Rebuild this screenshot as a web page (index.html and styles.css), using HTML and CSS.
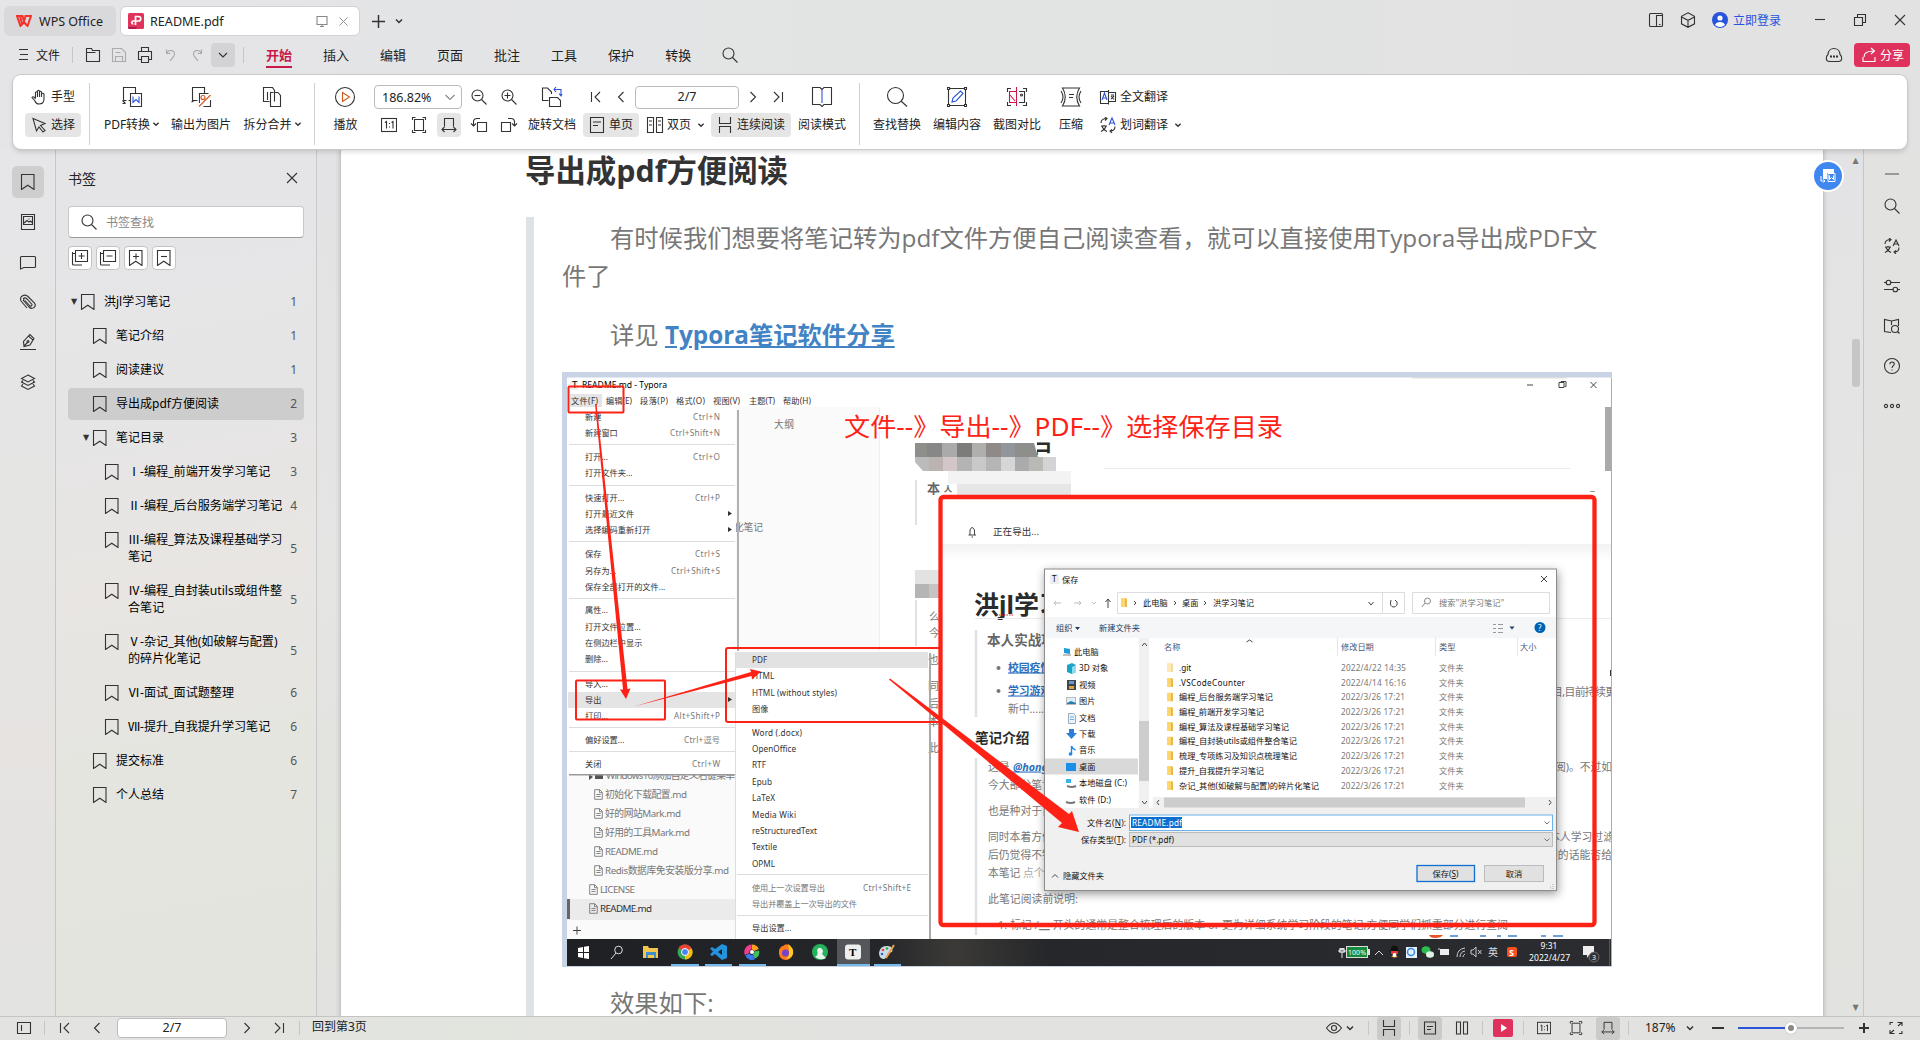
FILE: index.html
```html
<!DOCTYPE html>
<html lang="zh-CN">
<head>
<meta charset="utf-8">
<title>README.pdf - WPS Office</title>
<link rel="stylesheet" href="styles.css">
</head>
<body>
<svg class="defs" aria-hidden="true">
  <symbol id="chev" viewBox="0 0 16 16"><path d="M5 6.500l3 3 3-3"/></symbol>
  <symbol id="close" viewBox="0 0 16 16"><path d="M3 3l10 10M13 3L3 13"/></symbol>
  <symbol id="search" viewBox="0 0 16 16"><circle cx="6.500" cy="6.500" r="5.500"/><path d="M10.500 10.500l5 5"/></symbol>
  <symbol id="mark" viewBox="0 0 16 16"><path d="M1.500 .5h12.500v15l-6.200-4.300-6.300 4.300z"/></symbol>
  <symbol id="first" viewBox="0 0 16 16"><path d="M3.500 3v10M12 3L7 8l5 5"/></symbol>
  <symbol id="prev" viewBox="0 0 16 16"><path d="M10.500 3l-5 5 5 5"/></symbol>
  <symbol id="next" viewBox="0 0 16 16"><path d="M5.500 3l5 5-5 5"/></symbol>
  <symbol id="last" viewBox="0 0 16 16"><path d="M12.500 3v10M4 3l5 5-5 5"/></symbol>
  <symbol id="one" viewBox="0 0 16 16"><rect x=".5" y="1.500" width="15" height="13"/><path d="M4 5.500l1.500-1v7M10.500 5.500l1.500-1v7M8.500 6v1M8.500 9.500v1"/></symbol>
  <symbol id="fitpage" viewBox="0 0 16 16"><path d="M3.500 2.500h9v11h-9zM1.500 3V.5h3M11.500.5h3V3M1.500 13v2.500h3M11.500 15.500h3V13"/></symbol>
  <symbol id="fitwidth" viewBox="0 0 16 16"><path d="M3.500 9.500v-8h9v8M1 12.500h14M3.500 10L1 12.500 3.500 15M12.500 10l2.500 2.500-2.500 2.500"/></symbol>
  <symbol id="cont" viewBox="0 0 16 16"><path d="M2.500 0v6.500h11V0M2.500 16V9.500h11V16"/></symbol>
  <symbol id="single" viewBox="0 0 16 16"><path d="M1.500.5h13v15h-13zM4 5h8M4 8.500h5"/></symbol>
  <symbol id="file" viewBox="0 0 9 11"><path d="M.7.7h5l2.600 2.600v7H.7zM5.500.7v3h2.800M2.400 5.500h4.200M2.400 7.500h4.200"/></symbol>
  <symbol id="trans" viewBox="0 0 16 16"><path d="M1 6c0-3 2-4.500 6-4.500M5 0l2 1.500L5 3.500M15 9.500c0 3-2 4.500-5 4.500M12 12.500L10 14l2 2M1 9h6M4 8v1M2 9.500c1 3 3 4 5 5M6 9.500c-1 3-3 4-5 5"/></symbol>
  <symbol id="folder" viewBox="0 0 8 9"><path d="M1 0h4l2 1v8H1z" fill="#ffd66b" stroke="none"/><path d="M5 0l2 1v8H5z" fill="#e8b84c" stroke="none"/></symbol>
</svg>

<div class="app">
<header class="titlebar">
  <div class="tab tab-home">
    <svg class="wps" viewBox="0 0 16 12"><path d="M1 1h5.500L8 6.500 9.500 1H15L11.500 11 8 7l-3.500 4zM4 1l2 8" fill="none" stroke="#f5322b" stroke-width="2"/></svg>
    <span>WPS Office</span>
  </div>
  <div class="tab tab-doc">
    <svg class="pdf" viewBox="0 0 16 16"><rect width="16" height="16" rx="1.500" fill="#e0325a"/><path d="M0 14h9l-1 2H1.500Q0 16 0 14z" fill="#a81c4c"/><path d="M7.500 12V3.500h3a2.200 2.200 0 010 4.500H5.300a1.500 1.500 0 100 3" fill="none" stroke="#fff" stroke-width="1.700"/></svg>
    <span class="tab-name">README.pdf</span>
    <svg class="ic gray" viewBox="0 0 16 16"><path d="M3 3.500h10v8H3zM6 13.500h4M8 11.500v2"/></svg>
    <svg class="ic gray tab-x"><use href="#close"/></svg>
  </div>
  <svg class="ic plus" viewBox="0 0 16 16"><path d="M8 1v14M1 8h14"/></svg>
  <svg class="ic bold newchev"><use href="#chev"/></svg>
  <div class="win">
    <svg class="ic" viewBox="0 0 16 16"><rect x="1.500" y="1.500" width="13" height="13" rx="1"/><path d="M8.500 14.500v-11h6M11 12.500h1.500"/></svg>
    <svg class="ic" viewBox="0 0 16 16"><path d="M8 .8l6.500 3.500v7.500L8 15.300 1.500 11.800V4.300zM1.500 5L8 8.300 14.500 5M8 8.300v7"/></svg>
    <div class="login"><svg class="ic" viewBox="0 0 16 16"><circle cx="8" cy="8" r="8" fill="#2754dc" stroke="none"/><circle cx="8" cy="6" r="2.600" fill="#fff" stroke="none"/><path d="M3 13c1-4 9-4 10 0q-5 4-10 0z" fill="#fff" stroke="none"/></svg><span>立即登录</span></div>
    <svg class="ic" viewBox="0 0 16 16"><path d="M3 7.500h10"/></svg>
    <svg class="ic" viewBox="0 0 16 16"><path d="M2.500 5.500h8v8h-8zM5.500 5.500v-3h8v8h-3"/></svg>
    <svg class="ic"><use href="#close"/></svg>
  </div>
</header>

<nav class="menubar">
  <svg class="ic burger" viewBox="0 0 16 16"><path d="M4 2.500h9M5 7.500h8M4 12.500h9"/></svg>
  <span class="file">文件</span>
  <i class="vsep"></i>
  <div class="quick">
    <svg class="ic" viewBox="0 0 16 16"><path d="M1.500 14.500v-13h5l1 2h7v11zM1.500 5.500h9"/></svg>
    <svg class="ic faint" viewBox="0 0 16 16"><path d="M1.500 1.500h9l4 4v9h-13zM4.500 14v-4.500h7V14M4.500 5.500h5"/></svg>
    <svg class="ic" viewBox="0 0 16 16"><path d="M4.500 4.500v-4h7v4M4.500 12.500h-3v-8h13v8h-3M4.500 9.500h7v6h-7z"/></svg>
    <svg class="ic faint" viewBox="0 0 16 16"><path d="M3.500 2.500v4h4M3.500 6.500c2-5 9-3 8 1-.5 2-2 3.500-4.500 6.500"/></svg>
    <svg class="ic faint" viewBox="0 0 16 16"><path d="M12.500 2.500v4h-4M12.500 6.500c-2-5-9-3-8 1 .5 2 2 3.500 4.500 6.500"/></svg>
  </div>
  <span class="dropbtn"><svg class="ic"><path d="M4 6l4 4 4-4"/></svg></span>
  <i class="vsep"></i>
  <div class="tabs">
    <span class="on">开始</span><span>插入</span><span>编辑</span><span>页面</span><span>批注</span><span>工具</span><span>保护</span><span>转换</span>
    <svg class="ic"><use href="#search"/></svg>
  </div>
  <div class="menu-right">
    <svg class="ic" viewBox="0 0 16 16"><path d="M3.500 14.500c-4 0-4-5-1.500-7 .5-8 11.500-8 12 0 2.500 2 2.500 7-1.500 7z"/><path d="M4 9.500h2M7 9.500h2M10 9.500h2" stroke-width="2"/></svg>
    <span class="share"><svg class="ic" viewBox="0 0 16 16"><path d="M2 10v4.500h12V10M3 10c0-4 3-6 10-6M10 1l3.500 3L10 7"/></svg>分享</span>
  </div>
</nav>

<section class="ribbon">
  <div class="col hand sep">
    <span class="btn"><svg class="ic" viewBox="0 0 16 16"><path d="M4.500 9V3.500q1-1.500 2 0V8M6.500 3V2q1-1.500 2 0v6M8.500 3q1-1.500 2 0v5M10.500 5q1.500-1.500 2.500 0v5q0 5-5 5-3 0-4-3L1 8.500q1-1.500 2.500 0l1 1.500"/></svg>手型</span>
    <span class="btn on"><svg class="ic" viewBox="0 0 16 16"><path d="M2 1.500l12 5-4.500 2 4.500 5-2 1.500-4-5-2.500 4z"/></svg>选择</span>
  </div>
  <div class="col"><svg class="big" viewBox="0 0 20 20"><path d="M8.500 13.500h-2m-2 0h-3v-13h12v6M.5 13.500l3 3M3.500 16.500l-3 0"/><path d="M8.500 6.500h11v13h-11z"/><path class="blue" d="M11 9.500v6l3-3 3 3v-6"/></svg><span class="lbl">PDF转换<svg class="mini"><use href="#chev"/></svg></span></div>
  <div class="col"><svg class="big" viewBox="0 0 20 20"><path d="M6.500 13.500h-5v-13h12v6M.5 15l3-1.500M19.500 13v6.500h-7M8.500 16V6.500h9"/><g class="orange"><circle cx="12" cy="10.500" r="2"/><path d="M8 19.500L19.500 8"/></g></svg><span class="lbl">输出为图片</span></div>
  <div class="col sep"><svg class="big" viewBox="0 0 20 20"><path d="M7.500 14.500h-6v-14h9l2 3v11M5.500 5v8M12 5.500h4l2.500 3v11h-10v-14h3M12.500 5v8"/></svg><span class="lbl">拆分合并<svg class="mini"><use href="#chev"/></svg></span></div>
  <div class="col play"><svg class="big" viewBox="0 0 20 20"><circle cx="10" cy="10" r="9.500"/><path class="orange" d="M7.500 5.500v9l7-4.500z"/></svg><span class="lbl">播放</span></div>
  <div class="zoomgrid">
    <span class="zoombox">186.82%<svg class="ic gray"><path d="M3.500 6l4.500 4.500L12.500 6"/></svg></span>
    <svg class="ic" viewBox="0 0 16 16"><use href="#search"/><path d="M3.500 6.500h6"/></svg>
    <svg class="ic" viewBox="0 0 16 16"><use href="#search"/><path d="M3.500 6.500h6M6.500 3.500v6"/></svg>
    <svg class="ic"><use href="#one"/></svg>
    <svg class="ic"><use href="#fitpage"/></svg>
    <span class="sq on"><svg class="ic"><use href="#fitwidth"/></svg></span>
    <svg class="ic" viewBox="0 0 16 16"><path d="M6.500 5.500h9v9h-9zM9 1.500H6Q2.500 1.500 2.500 5v4M0 6.500L2.500 9 5 6.500"/></svg>
    <svg class="ic" viewBox="0 0 16 16"><path d="M.5 5.500h9v9h-9zM7 1.500h3q3.500 0 3.500 3.500v4M11 6.500L13.500 9 16 6.500"/></svg>
  </div>
  <div class="col"><svg class="big" viewBox="0 0 20 20"><path d="M6.500 13.500h-6V1h5l4 4v2M7.500 10.500h8l3 3v6h-11z"/><path class="blue" d="M12 2.500h7v6M14 0l-2 2.500L14 5M17 6.500L19 9l1-2"/></svg><span class="lbl">旋转文档</span></div>
  <div class="pager">
    <div class="prow">
      <svg class="ic"><use href="#first"/></svg><svg class="ic"><use href="#prev"/></svg><span class="pagebox">2/7</span><svg class="ic"><use href="#next"/></svg><svg class="ic"><use href="#last"/></svg>
    </div>
    <div class="vrow">
      <span class="btn on"><svg class="ic"><use href="#single"/></svg>单页</span>
      <span class="btn dbl"><svg class="ic" viewBox="0 0 16 16"><path d="M.5.5h6v15h-6zM9.500.5h6v15h-6zM2 4h3M2 8h3M11 4h3M11 8h3"/></svg>双页<svg class="mini"><use href="#chev"/></svg></span>
      <span class="btn on wide"><svg class="ic"><use href="#cont"/></svg>连续阅读</span>
    </div>
  </div>
  <div class="col sep read"><svg class="big" viewBox="0 0 20 20"><path d="M10 2.500L8 .5H.5v17H8l2 2 2-2h7.500V.5H12z"/><path class="blue" d="M10 3v13"/></svg><span class="lbl">阅读模式</span></div>
  <div class="col find"><svg class="big" viewBox="0 0 20 20"><circle cx="8.500" cy="8.500" r="8"/><path d="M14 14l6 5.500"/></svg><span class="lbl">查找替换</span></div>
  <div class="col"><svg class="big" viewBox="0 0 20 20"><path d="M1.500 3v14M18.500 3v14M3 1.500h14M3 18.500h14M.5.5h2v2h-2zM17.500.5h2v2h-2zM.5 17.500h2v2h-2zM17.500 17.500h2v2h-2z"/><path class="blue" d="M5 15l1-4 7.500-7 2.500 2.500-7 7.500z"/></svg><span class="lbl">编辑内容</span></div>
  <div class="col"><svg class="big" viewBox="0 0 20 20"><path d="M.5 5V1.500H4M16 1.500h3.500V5M.5 15v3.500H4M16 18.500h3.500V15M12 4.500h5.500v11H12"/><circle cx="14.500" cy="8" r="1"/><path class="red" d="M9.500 0v19M9 4.500H2.500v11H9M3 8l5 6"/></svg><span class="lbl">截图对比</span></div>
  <div class="col"><svg class="big" viewBox="0 0 20 20"><path d="M0 4q4 6 0 12M20 4q-4 6 0 12M1.500 1h17Q13 10 18.500 19h-17Q7 10 1.500 1zM8 7.500h5M8 10.500h4"/></svg><span class="lbl">压缩</span></div>
  <div class="col trans">
    <span class="btn"><svg class="ic" viewBox="0 0 16 16"><path d="M9 14.500H.5v-12h8M8.500 1v14.500M9 3.500h6.500v9H9M11 6h3M11 10l3-3M11 7l3 3.500"/><path class="blue" d="M2 11l2.500-7L7 11M3 9h3"/></svg>全文翻译</span>
    <span class="btn"><svg class="ic" viewBox="0 0 16 16"><use href="#trans"/><path class="blue" d="M9 8l3-7 3 7M10 6h4"/></svg>划词翻译<svg class="mini"><use href="#chev"/></svg></span>
  </div>
</section>

<main class="main">
  <aside class="rail">
    <span class="on"><svg class="ic"><use href="#mark"/></svg></span>
    <span><svg class="ic" viewBox="0 0 16 16"><path d="M1.500.5h13v15h-13zM3.500 2.500h9v8h-9zM4 9l3-2.500L9 8l1.500-1L12 8.500M8.500 5h1"/></svg></span>
    <span><svg class="ic" viewBox="0 0 16 16"><path d="M.5 15V3.500q0-1 1-1h13q1 0 1 1v9q0 1-1 1H4z"/></svg></span>
    <span><svg class="ic" viewBox="0 0 16 16"><path d="M3 6l6 7c3 3 8 0 5.500-4L8 2.500C5-.5-1 2 1 7l6 7M4 6.500L3.500 4.500Q5 3 7 5l5 5.500Q12 12.500 10 12L5 6.500"/></svg></span>
    <span><svg class="ic" viewBox="0 0 16 16"><path d="M0 15.500h16M4 12.500l-.5-5 5-5.500L13 6l-3 5zM8.500 2L10 .500 14 4.500 13 6M4 12l4-4"/><circle cx="8" cy="7.500" r="1"/></svg></span>
    <span><svg class="ic" viewBox="0 0 16 16"><path d="M8 1l6.500 3.500L8 8 1.500 4.500zM3 6.500L1.500 8 8 11.500 14.500 8 13 6.500M3 10l-1.500 2L8 15.500l6.500-3.500L13 10"/></svg></span>
  </aside>

  <aside class="panel">
    <div class="panel-head"><h2>书签</h2><svg class="ic"><use href="#close"/></svg></div>
    <div class="panel-search"><svg class="ic"><use href="#search"/></svg>书签查找</div>
    <div class="tools">
      <span><svg class="ic" viewBox="0 0 16 16"><path d="M3.500.5h12v11h-12zM.5 2v12q0 1 1 1H10M9.500 3v6M6.500 6h6M.5 3.500h3"/></svg></span>
      <span><svg class="ic" viewBox="0 0 16 16"><path d="M3.500.5h12v11h-12zM.5 2v12q0 1 1 1H10M6.500 6h6M.5 3.500h3"/></svg></span>
      <span><svg class="ic"><use href="#mark"/><path d="M8 3.500v6M5 6.500h6"/></svg></span>
      <span><svg class="ic"><use href="#mark"/><path d="M5 6.500h6"/></svg></span>
    </div>
    <ul class="tree">
      <li class="l1"><b>▼</b><svg class="ic"><use href="#mark"/></svg><p>洪jl学习笔记</p><em>1</em></li>
      <li class="l2"><svg class="ic"><use href="#mark"/></svg><p>笔记介绍</p><em>1</em></li>
      <li class="l2"><svg class="ic"><use href="#mark"/></svg><p>阅读建议</p><em>1</em></li>
      <li class="l2 on"><svg class="ic"><use href="#mark"/></svg><p>导出成pdf方便阅读</p><em>2</em></li>
      <li class="l2"><b>▼</b><svg class="ic"><use href="#mark"/></svg><p>笔记目录</p><em>3</em></li>
      <li class="l3"><svg class="ic"><use href="#mark"/></svg><p>Ⅰ-编程_前端开发学习笔记</p><em>3</em></li>
      <li class="l3"><svg class="ic"><use href="#mark"/></svg><p>Ⅱ-编程_后台服务端学习笔记</p><em>4</em></li>
      <li class="l3"><svg class="ic"><use href="#mark"/></svg><p>Ⅲ-编程_算法及课程基础学习<br>笔记</p><em>5</em></li>
      <li class="l3"><svg class="ic"><use href="#mark"/></svg><p>Ⅳ-编程_自封装utils或组件整<br>合笔记</p><em>5</em></li>
      <li class="l3"><svg class="ic"><use href="#mark"/></svg><p>Ⅴ-杂记_其他(如破解与配置)<br>的碎片化笔记</p><em>5</em></li>
      <li class="l3"><svg class="ic"><use href="#mark"/></svg><p>Ⅵ-面试_面试题整理</p><em>6</em></li>
      <li class="l3"><svg class="ic"><use href="#mark"/></svg><p>Ⅶ-提升_自我提升学习笔记</p><em>6</em></li>
      <li class="l2"><svg class="ic"><use href="#mark"/></svg><p>提交标准</p><em>6</em></li>
      <li class="l2"><svg class="ic"><use href="#mark"/></svg><p>个人总结</p><em>7</em></li>
    </ul>
  </aside>

  <div class="viewer">
    <article class="page">
      <h1>导出成pdf方便阅读</h1>
      <blockquote>
        <p>有时候我们想要将笔记转为pdf文件方便自己阅读查看，就可以直接使用Typora导出成PDF文<br>件了</p>
        <p class="see">详见 <a>Typora笔记软件分享</a></p>
        <svg class="shot" viewBox="562 372 1050 595">
          <defs>
            <linearGradient id="fade" x1="0" y1="0" x2="0" y2="1"><stop offset="0" stop-color="#f2f2f2"/><stop offset="1" stop-color="#fff"/></linearGradient>
            <linearGradient id="bar" x1="0" x2="1"><stop offset="0" stop-color="#1f2024"/><stop offset=".3" stop-color="#25262a"/><stop offset=".37" stop-color="#3b3a37"/><stop offset=".46" stop-color="#26272a"/><stop offset="1" stop-color="#2a2c30"/></linearGradient>
            <filter id="soft" x="-5%" y="-5%" width="110%" height="112%"><feDropShadow dx="1" dy="3" stdDeviation="5" flood-opacity=".4"/></filter>
            <clipPath id="stub"><rect x="1037" y="440" width="16" height="15"/></clipPath>
          </defs>
          <rect x="562" y="372" width="1050" height="595" fill="#c9d3e6"/>
          <rect x="567" y="377.500" width="1044" height="562" fill="#fff"/>
          <!-- editor title and menu bar -->
          <rect x="570" y="381" width="8" height="9" fill="#f0f0f0"/>
          <g class="t10"><text x="572" y="385">T</text><text x="582" y="385" textLength="85" lengthAdjust="spacingAndGlyphs">README.md - Typora</text></g>
          <rect x="570" y="394" width="32" height="13" fill="#e5e5e5"/>
          <g class="t8 d"><text x="571" y="401" textLength="27">文件(F)</text><text x="606" y="401" textLength="26">编辑(E)</text><text x="640" y="401" textLength="28">段落(P)</text><text x="676" y="401" textLength="29">格式(O)</text><text x="713" y="401" textLength="27">视图(V)</text><text x="749" y="401" textLength="26">主题(T)</text><text x="783" y="401" textLength="28">帮助(H)</text></g>
          <path class="ln" d="M1527 385h6M1559 382.500h5v5h-5zM1561 382.500v-1h5v5h-1.500M1590.500 382l6 6M1596.500 382l-6 6"/>
          <rect x="1412" y="377" width="155" height="1.500" fill="#ddd"/>
          <rect x="567" y="407" width="312" height="532" fill="#fafafa"/>
          <path d="M879.500 407v532" stroke="#eee"/>
          <rect x="1605" y="407" width="6" height="64" fill="#ababab"/>
          <g class="t10 m"><text x="774" y="425" textLength="20">大纲</text><text x="734" y="528" textLength="29">化笔记</text></g>
          <!-- pixelated title -->
          <g clip-path="url(#stub)"><text class="h" x="1032" y="452" font-size="21">己</text></g>
          <g><rect x="915" y="443" width="12" height="14" fill="#8e8e8a"/><rect x="927" y="443" width="15" height="14" fill="#878788"/><rect x="942" y="443" width="15" height="14" fill="#aaa"/><rect x="957" y="443" width="15" height="14" fill="#7c7d7b"/><rect x="972" y="443" width="14" height="14" fill="#afafad"/><rect x="986" y="443" width="15" height="14" fill="#8f8988"/><rect x="1001" y="443" width="14" height="14" fill="#929599"/><path d="M1015 443h19l4 14h-23z" fill="#8e8e8d"/>
          <path d="M915 457h14v14h-6l-8-9z" fill="#bbb"/><rect x="929" y="457" width="14" height="14" fill="#bcb2b0"/><rect x="943" y="457" width="14" height="14" fill="#d2c6c8"/><rect x="957" y="457" width="15" height="14" fill="#b4b4b4"/><rect x="972" y="457" width="14" height="14" fill="#c9c9c9"/><rect x="986" y="457" width="15" height="14" fill="#b5b5b5"/><rect x="1001" y="457" width="14" height="14" fill="#d6d6d6"/><rect x="1015" y="457" width="14" height="14" fill="#aaabad"/><rect x="1029" y="457" width="14" height="14" fill="#b9b9b6"/><rect x="1043" y="457" width="13" height="14" fill="#d4d4d4"/>
          <rect x="948" y="471" width="123" height="13" fill="#f3f3f3"/><rect x="957" y="484" width="114" height="12" fill="#e6e6e7"/>
          <rect x="915" y="570" width="28" height="14" fill="#e2e2e2"/><rect x="915" y="584" width="28" height="14" fill="#b5b5b5"/><rect x="929" y="584" width="14" height="14" fill="#c5c3c4"/></g>
          <path d="M1104 468.500h466" stroke="#eaeaea"/>
          <path d="M916 480v45M916 600v46" stroke="#dfe2e5" stroke-width="2"/>
          <text class="h g" x="927" y="489" font-size="13">本</text><text class="h g" x="944" y="489" font-size="8">人</text>
          <path d="M1590 491.500h5" stroke="#999"/>
          <g class="t11 m"><text x="929" y="617">么</text><text x="929" y="633">今</text><text x="928" y="660">也</text><text x="928" y="686">同</text><text x="928" y="704">后</text><text x="928" y="722">本</text><text x="928" y="748">此</text></g>
          <!-- left file list -->
          <g class="t10 m"><text x="606" y="776" textLength="129">Windows10添加自定义右键菜单</text><text x="605" y="795" textLength="82">初始化下载配置.md</text><text x="605" y="814" textLength="76">好的网站Mark.md</text><text x="605" y="833" textLength="85">好用的工具Mark.md</text><text x="605" y="852" textLength="53">README.md</text><text x="605" y="871" textLength="124">Redis数据库免安装版分享.md</text><text x="600" y="890" textLength="35">LICENSE</text></g>
          <rect x="567" y="899" width="168" height="21" fill="#ebebeb"/><rect x="567" y="899" width="3" height="20" fill="#666"/>
          <text class="t10 d" x="600" y="909" textLength="52">README.md</text>
          <g class="ico"><use href="#file" x="594" y="789" width="9" height="11"/><use href="#file" x="594" y="808" width="9" height="11"/><use href="#file" x="594" y="827" width="9" height="11"/><use href="#file" x="594" y="846" width="9" height="11"/><use href="#file" x="594" y="865" width="9" height="11"/><use href="#file" x="589" y="884" width="9" height="11"/><use href="#file" x="589" y="903" width="9" height="11"/></g>
          <path class="ln" d="M573 930.500h8M577 926.500v8"/>
          <path d="M589 774l4 3-4 3zM595 774h8v5h-8z" fill="#555"/>
          <!-- file menu -->
          <rect x="567" y="407" width="169" height="367" fill="#fff"/>
          <rect x="569" y="774" width="166" height="1.500" fill="#999"/>
          <rect x="737" y="410" width="2" height="242" fill="#b0b0b0"/>
          <rect x="568" y="692" width="167" height="16" fill="#e4e4e4"/>
          <path d="M569 444.500h166M569 485.500h166M569 541.500h166M569 598.500h166M569 671.500h166M569 727.500h166M569 751.500h166" stroke="#ddd"/>
          <g class="t8 d"><text x="585" y="417">新建</text><text x="585" y="433">新建窗口</text><text x="585" y="457">打开...</text><text x="585" y="473">打开文件夹...</text><text x="585" y="498">快速打开...</text><text x="585" y="514">打开最近文件</text><text x="585" y="530">选择编码重新打开</text><text x="585" y="554">保存</text><text x="585" y="571">另存为...</text><text x="585" y="587">保存全部打开的文件...</text><text x="585" y="610">属性...</text><text x="585" y="627">打开文件位置...</text><text x="585" y="643">在侧边栏中显示</text><text x="585" y="659">删除...</text><text x="585" y="684">导入...</text><text x="585" y="700">导出</text><text x="585" y="716">打印...</text><text x="585" y="740">偏好设置...</text><text x="585" y="764">关闭</text></g>
          <g class="t8 m end"><text x="720" y="417" textLength="27">Ctrl+N</text><text x="720" y="433" textLength="50">Ctrl+Shift+N</text><text x="720" y="457" textLength="27">Ctrl+O</text><text x="720" y="498" textLength="25">Ctrl+P</text><text x="720" y="554" textLength="25">Ctrl+S</text><text x="720" y="571" textLength="49">Ctrl+Shift+S</text><text x="720" y="716" textLength="46">Alt+Shift+P</text><text x="720" y="740" textLength="36">Ctrl+逗号</text><text x="720" y="764" textLength="28">Ctrl+W</text></g>
          <path d="M728 511l4 2.500-4 2.500zM728 527l4 2.500-4 2.500zM728 697l4 2.500-4 2.500z" fill="#333"/>
          <!-- export submenu -->
          <rect x="736" y="651" width="192" height="288" fill="#fff"/>
          <rect x="736" y="652" width="192" height="16" fill="#e2e2e2"/>
          <path d="M737 874.500h191M737 915.500h191" stroke="#ddd"/><path d="M930 653v286" stroke="#aaa" stroke-width="2"/><path d="M735.500 652v287" stroke="#ddd"/>
          <g class="t8 d"><text x="752" y="660">PDF</text><text x="752" y="676">HTML</text><text x="752" y="693" textLength="85">HTML (without styles)</text><text x="752" y="709">图像</text><text x="752" y="733" textLength="50">Word (.docx)</text><text x="752" y="749" textLength="44">OpenOffice</text><text x="752" y="765">RTF</text><text x="752" y="782" textLength="20">Epub</text><text x="752" y="798" textLength="23">LaTeX</text><text x="752" y="815" textLength="44">Media Wiki</text><text x="752" y="831" textLength="65">reStructuredText</text><text x="752" y="847" textLength="25">Textile</text><text x="752" y="864" textLength="23">OPML</text><text x="752" y="928">导出设置...</text></g>
          <g class="t8 m"><text x="752" y="888" textLength="73">使用上一次设置导出</text><text x="752" y="904" textLength="105">导出并覆盖上一次导出的文件</text><text x="863" y="888" textLength="48">Ctrl+Shift+E</text></g>
          <!-- exporting window -->
          <rect x="942" y="498" width="669" height="441" fill="#fff"/>
          <rect x="942" y="544" width="669" height="16" fill="url(#fade)"/>
          <path class="ln" d="M968.500 535h7.500M970 535v-5q2-5 4.500 0v5M971.500 537h1.500"/>
          <text class="t9 d" x="993" y="532" textLength="46">正在导出...</text>
          <text class="h" x="974" y="605" font-size="25">洪jl学习笔记</text>
          <path d="M999 615h14" stroke="#e22" stroke-dasharray="1.500 1"/><path d="M975 618.500h636" stroke="#eaeaea"/>
          <path d="M976 630v87M976 758v177" stroke="#dfe2e5" stroke-width="2.500"/>
          <text class="h g" x="987" y="640" font-size="13.600">本人实战项</text>
          <circle cx="998.500" cy="668" r="2" fill="#777"/><circle cx="998.500" cy="691" r="2" fill="#777"/>
          <g class="lk"><text x="1008" y="668">校园疫情</text><text x="1008" y="691">学习游戏</text><text x="1013" y="767" font-style="italic">@hongjl</text></g>
          <text class="h" x="975" y="738" font-size="13.600">笔记介绍</text>
          <g class="t11 m"><text x="1008" y="709">新中……</text><text x="988" y="767">这是</text><text x="988" y="785">今大部分笔记</text><text x="988" y="811">也是种对于自</text><text x="988" y="837">同时本着方便</text><text x="988" y="855">后仍觉得不错</text><text x="988" y="873">本笔记</text><text x="1023" y="873" fill="#aaa">点个star</text><text x="988" y="899" textLength="90">此笔记阅读前说明:</text><text x="998" y="925" textLength="510">1. 标记 /▁ 开头的通常是整合梳理后的版本 or 更为详细系统学习阶段的笔记,方便同学们抓重部分进行查阅</text></g>
          <g class="t11 m"><text x="1552" y="692" textLength="64">目,目前持续更</text><text x="1555" y="767" textLength="57">阅)。不过如</text><text x="1549" y="837" textLength="65">本人学习过滤</text><text x="1547" y="855" textLength="65">便的话能否给</text></g>
          <rect x="1610" y="670" width="2" height="6" fill="#333"/>
          <path d="M1429 935h14q-2 3-8 3-5 0-6-3z" fill="#e8532a"/><path d="M1450 936h8M1480 936h6M1497 936h4M1508 936h9M1541 936h5M1553 936h10" stroke="#6fa0d8" stroke-width="2"/>
          <!-- save dialog -->
          <rect x="1044.500" y="569" width="512" height="321.500" fill="#fff" stroke="#8c8c8c" filter="url(#soft)"/>
          <rect x="1045" y="617" width="511" height="21" fill="#f5f6f7"/>
          <rect x="1045" y="808" width="511" height="82" fill="#f0f0f0"/>
          <path d="M1117.500 592.500h287v21h-287zM1382.500 593v20M1412.500 592.500h137v21h-137z" fill="none" stroke="#ddd"/>
          <rect x="1050" y="574" width="9" height="10" fill="#eee"/>
          <g class="t8 k"><text x="1052" y="579">T</text><text x="1062" y="580">保存</text><text x="1143" y="603">此电脑</text><text x="1182" y="603">桌面</text><text x="1213" y="603">洪学习笔记</text></g>
          <path class="ln" d="M1541 576l6 6M1547 576l-6 6M1108 608v-9M1105.500 602l2.500-3 2.500 3M1134 601l2 2-2 2M1174 601l2 2-2 2M1204 601l2 2-2 2M1368.500 602l2.500 3 2.500-3M1391 600q-2 7 3 7 4-1 3-5l-2-2M1246.500 642l3-2 3 2"/>
          <path d="M1061 603h-7M1056 601l-2 2 2 2M1074 603h7M1079 601l2 2-2 2M1092 602l2 2 2-2" fill="none" stroke="#bbb"/>
          <use href="#folder" x="1120" y="598" width="8" height="9"/>
          <circle cx="1427.500" cy="601" r="3" fill="none" stroke="#888"/><path d="M1425 603l-3 4" stroke="#888"/>
          <text class="t8 m" x="1439" y="603" textLength="65">搜索"洪学习笔记"</text>
          <g class="t8" fill="#1f3a63"><text x="1056" y="628">组织</text><text x="1099" y="628">新建文件夹</text></g>
          <path d="M1075 627h5l-2.500 3zM1509.500 626.500h5l-2.500 3z" fill="#1f3a63"/>
          <path d="M1493 624.500h3M1493 628.500h3M1493 632.500h3M1498 624.500h5M1498 628.500h5M1498 632.500h5" stroke="#999"/>
          <circle cx="1540" cy="627.500" r="5.500" fill="#0063b1"/><text x="1538" y="628.500" font-size="8" fill="#fff">?</text>
          <rect x="1045" y="758.500" width="93" height="16" fill="#d9d9d9"/>
          <rect x="1139" y="638" width="10" height="170" fill="#f0f0f0"/><rect x="1139" y="721" width="10" height="60" fill="#cdcdcd"/>
          <rect x="1153" y="797" width="403" height="11" fill="#f0f0f0"/><rect x="1164" y="797.500" width="361" height="10" fill="#cdcdcd"/>
          <path class="ln" d="M1142 646l2.500-3 2.500 3M1142 801l2.500 3 2.500-3M1159 800l-2 2.500 2 2.500M1549 800l2 2.500-2 2.500"/>
          <path d="M1337.500 638v18M1435.500 638v18M1517.500 638v18" stroke="#e5e5e5"/>
          <g class="t8 k"><text x="1074" y="652">此电脑</text><text x="1079" y="668">3D 对象</text><text x="1079" y="685">视频</text><text x="1079" y="701">图片</text><text x="1079" y="718">文档</text><text x="1079" y="734">下载</text><text x="1079" y="750">音乐</text><text x="1079" y="767">桌面</text><text x="1079" y="783" textLength="48">本地磁盘 (C:)</text><text x="1079" y="800" textLength="32">软件 (D:)</text></g>
          <path d="M1064 648l6 1v5l-6-1z" fill="#1d9bdc"/><path d="M1063 655h8" stroke="#aaa" stroke-width="1.500"/>
          <path d="M1067 665l5-2 4 2v7l-4 2-5-2z" fill="#19a3c8"/><path d="M1072 667l4-2v7l-4 2z" fill="#8adcf0"/>
          <rect x="1067" y="680" width="9" height="10" fill="#444"/><rect x="1069" y="681" width="5" height="3" fill="#5a9ae0"/><rect x="1069" y="686" width="5" height="3" fill="#d8a63c"/>
          <rect x="1066.500" y="697.500" width="9" height="7" fill="#dfeefa" stroke="#bbb"/><path d="M1067 703l4-2 5 2v1h-9z" fill="#2a7fa8"/>
          <path d="M1068.500 713.500h5l2 2v8h-7z" fill="#e9f2fa" stroke="#9ab"/><path d="M1070 717h4M1070 719.500h4" stroke="#6aaedd"/>
          <path d="M1069 729h5v4h3l-5.500 6-5.500-6h3z" fill="#2a7fd8"/>
          <path d="M1071.500 754v-8q1 3 4 4" fill="none" stroke="#1e88e5" stroke-width="1.400"/><circle cx="1070.500" cy="754" r="1.800" fill="#1e88e5"/>
          <rect x="1066" y="763" width="10" height="8" fill="#1a8fe8"/>
          <rect x="1066" y="779" width="5" height="4" fill="#3bb4e8"/><path d="M1067 786q5 2 9 0M1066 802q5 2 9 0" stroke="#777" stroke-width="2" fill="none"/>
          <g class="t8" fill="#44597a"><text x="1164" y="647">名称</text><text x="1341" y="647">修改日期</text><text x="1439" y="647">类型</text><text x="1520" y="647">大小</text></g>
          <g><use href="#folder" x="1166" y="663" width="8" height="9" opacity=".5"/><use href="#folder" x="1166" y="678" width="8" height="9"/><use href="#folder" x="1166" y="692.500" width="8" height="9"/><use href="#folder" x="1166" y="707" width="8" height="9"/><use href="#folder" x="1166" y="722" width="8" height="9"/><use href="#folder" x="1166" y="736.500" width="8" height="9"/><use href="#folder" x="1166" y="751" width="8" height="9"/><use href="#folder" x="1166" y="766" width="8" height="9"/><use href="#folder" x="1166" y="781" width="8" height="9"/></g>
          <g class="t8 k"><text x="1179" y="668">.git</text><text x="1179" y="683" textLength="66">.VSCodeCounter</text><text x="1179" y="697.500" textLength="94">编程_后台服务端学习笔记</text><text x="1179" y="712" textLength="85">编程_前端开发学习笔记</text><text x="1179" y="727" textLength="110">编程_算法及课程基础学习笔记</text><text x="1179" y="741.500" textLength="118">编程_自封装utils或组件整合笔记</text><text x="1179" y="756" textLength="118">梳理_专项练习及知识点梳理笔记</text><text x="1179" y="771" textLength="85">提升_自我提升学习笔记</text><text x="1179" y="786" textLength="140">杂记_其他(如破解与配置)的碎片化笔记</text></g>
          <g class="t8 m"><text x="1341" y="668" textLength="65">2022/4/22 14:35</text><text x="1341" y="683" textLength="65">2022/4/14 16:16</text><text x="1341" y="697.500" textLength="64">2022/3/26 17:21</text><text x="1341" y="712" textLength="64">2022/3/26 17:21</text><text x="1341" y="727" textLength="64">2022/3/26 17:21</text><text x="1341" y="741.500" textLength="64">2022/3/26 17:21</text><text x="1341" y="756" textLength="64">2022/3/26 17:21</text><text x="1341" y="771" textLength="64">2022/3/26 17:21</text><text x="1341" y="786" textLength="64">2022/3/26 17:21</text>
          <text x="1439" y="668">文件夹</text><text x="1439" y="683">文件夹</text><text x="1439" y="697.500">文件夹</text><text x="1439" y="712">文件夹</text><text x="1439" y="727">文件夹</text><text x="1439" y="741.500">文件夹</text><text x="1439" y="756">文件夹</text><text x="1439" y="771">文件夹</text><text x="1439" y="786">文件夹</text></g>
          <rect x="1129.500" y="815" width="423" height="15.500" fill="#fff" stroke="#6db3ea"/><rect x="1129.500" y="832.500" width="423" height="14" fill="#e1e1e1" stroke="#bbb"/>
          <rect x="1131" y="817" width="51" height="11" fill="#0c6fd0"/>
          <g class="t8 k"><text x="1087" y="823" textLength="39">文件名(<tspan text-decoration="underline">N</tspan>):</text><text x="1081" y="840" textLength="45">保存类型(<tspan text-decoration="underline">T</tspan>):</text><text x="1132" y="840" textLength="42">PDF (*.pdf)</text><text x="1063" y="876">隐藏文件夹</text></g>
          <text class="t8" x="1132" y="823" fill="#fff" textLength="50">README.pdf</text>
          <path class="ln" d="M1052 877.500l3-3 3 3"/><path d="M1544.500 821.500l2.500 2.500 2.500-2.500M1544.500 838.500l2.500 2.500 2.500-2.500" fill="none" stroke="#777"/>
          <rect x="1417" y="865.500" width="57.500" height="16" fill="#e1e1e1" stroke="#0f6fd0" stroke-width="1.300"/><rect x="1484.500" y="865.500" width="59" height="16" fill="#e1e1e1" stroke="#bbb"/>
          <g class="t8 k mid"><text x="1445.500" y="874">保存(<tspan text-decoration="underline">S</tspan>)</text><text x="1514" y="874">取消</text></g>
          <path d="M1553 884v5M1550.500 886.500v2.500" stroke="#aaa" stroke-dasharray="1 1"/>
          <!-- taskbar -->
          <rect x="567" y="939" width="1044" height="27" fill="url(#bar)"/>
          <rect x="837" y="939" width="33" height="26" fill="#55565a"/>
          <path d="M671 965h28M705 965h27M739 965h27M837 965h33M874 965h27" stroke="#76b9ed" stroke-width="1.800"/>
          <path d="M578 948l5-1v5h-5zM584 946.800l5-.8v6h-5zM578 953h5v5l-5-1zM584 953h5v6l-5-.8z" fill="#fff"/>
          <g fill="none" stroke="#ddd"><circle cx="618.500" cy="950" r="3.800"/><path d="M616 953l-5 6"/></g>
          <path d="M643 946h5l1 2h9v10h-15z" fill="#f3c64f"/><path d="M646 952h10v6h-2v-3h-6v3h-2z" fill="#3e8ed0"/>
          <circle cx="685" cy="952" r="7.500" fill="#34a853"/><path d="M685 952l-6.500-3.800a7.500 7.500 0 0113 0z" fill="#ea4335"/><path d="M685 952l6.500-3.800a7.500 7.500 0 01-6.500 11.300z" fill="#fbbc05"/><circle cx="685" cy="952" r="3.500" fill="#4285f4" stroke="#fff"/>
          <path d="M722 944l5 2v12l-5 2-7-6-3 2-2-1.500 3-3-3-3 2-1.500 3 2zM722 949l-4 3 4 3z" fill="#2493dc" fill-rule="evenodd"/>
          <g fill="none" stroke-width="5"><path d="M752 947a5 5 0 014.500 3" stroke="#ff9f1c"/><path d="M756.800 951a5 5 0 01-3 5.500" stroke="#3fc060"/><path d="M754 957a5 5 0 01-6.500-2.500" stroke="#3c78f0"/><path d="M747.200 954a5 5 0 014.500-7" stroke="#ef3d8f"/></g><circle cx="752" cy="952" r="2" fill="#fff"/>
          <path d="M779 950q2-4 4-4 4-4 8 1 3 3 2 7-2 6-8 6-7-1-6-10z" fill="#ff7a1a"/><path d="M788 944q6 4 5 10-2 5-7 5 5-4 2-15z" fill="#ffca28"/><circle cx="785.500" cy="953" r="3.500" fill="#7542c8"/>
          <circle cx="820" cy="952" r="8" fill="#24b35a"/><path d="M815 957q4-2 2-7 2-4 5-1 2 2 0 5l4 4q-5 3-11-1z" fill="#e8f4ec"/>
          <rect x="845" y="944.500" width="16" height="15" rx="3" fill="#eee"/><text x="849" y="953" font-size="11" font-family="Liberation Serif" font-weight="700">T</text>
          <path d="M879 953q1-8 9-7 6 1 4 6l-4 1q-1 6-5 6-4-1-4-6z" fill="#c8dcea"/><circle cx="883" cy="950" r="1.300" fill="#e44"/><circle cx="887" cy="948.500" r="1.300" fill="#3a3"/><circle cx="882" cy="954" r="1.300" fill="#36c"/><path d="M894 945l-8 13" stroke="#e8a04c" stroke-width="2"/>
          <path d="M1340 948v4h4v-4M1342 952v6M1339 950h6v2h-6z" stroke="#ddd" fill="#ddd"/>
          <rect x="1346.500" y="946.500" width="21" height="11" fill="#158a3c" stroke="#ddd"/><rect x="1368" y="949" width="2" height="6" fill="#ddd"/><text x="1348" y="953" font-size="7" fill="#fff" textLength="18">100%</text>
          <path d="M1375 955l4-4 4 4" fill="none" stroke="#ddd"/>
          <ellipse cx="1394.500" cy="951" rx="4" ry="5.500" fill="#111"/><path d="M1391 951h7v3h-7z" fill="#e33"/><path d="M1391 956q3.500 3 7 0z" fill="#f6a821"/><circle cx="1394.500" cy="955" r="2" fill="#fff"/>
          <rect x="1406" y="947" width="11" height="11" fill="#e6f0fa"/><circle cx="1411" cy="952" r="3.500" fill="none" stroke="#3a8be0" stroke-width="1.500"/>
          <ellipse cx="1426" cy="950" rx="4.500" ry="3.800" fill="#2bbd4f"/><ellipse cx="1430" cy="954.500" rx="4" ry="3.300" fill="#dff2e3"/>
          <rect x="1440" y="949" width="9" height="6" fill="#eee"/><path d="M1438 949h2" stroke="#ddd"/>
          <g fill="none" stroke="#ccc"><path d="M1457 957q0-8 8-9M1460 957q0-5 5-6M1463 957q0-2 2-3M1471 950h2l3-3v10l-3-3h-2zM1478 950l3.500 4M1481.500 950l-3.500 4"/></g>
          <text x="1488" y="952.500" font-size="10" fill="#ddd">英</text>
          <rect x="1507" y="947" width="10" height="10" rx="2" fill="#f4511e"/><text x="1509" y="953" font-size="9" font-weight="700" fill="#fff">S</text>
          <g fill="#fff" font-size="8.500" class="mid"><text x="1549" y="946.500">9:31</text><text x="1549.500" y="958.500" textLength="41">2022/4/27</text></g>
          <path d="M1583 946h11v9h-5l-2 3v-3h-4z" fill="#eee"/><circle cx="1594" cy="957" r="5" fill="#333" stroke="#888" stroke-width=".7"/><text x="1592" y="958" font-size="7" fill="#fff">3</text>
          <path d="M1609.500 939v27" stroke="#555"/>
          <path d="M1611.500 378v588" stroke="#a3aec6"/>
          <!-- red annotations -->
          <g fill="none" stroke="#fe2216" stroke-width="2"><rect x="568.500" y="386.500" width="55" height="26" rx="1"/><rect x="576" y="680.500" width="89" height="39" rx="1"/><path d="M940 648H728q-2 0-2 2v70q0 2 2 2h212"/></g>
          <rect x="940.500" y="497" width="654" height="428" rx="3" fill="none" stroke="#fe2216" stroke-width="4.300"/>
          <g fill="#fe2216"><path d="M595 404l1.500 0L627.500 689l3-.5-4.500 10.500-6-9.500 3 0z"/><path d="M634 706.500l117-34.500-1-3 11 2.500-9 8-.5-3.500z"/><path d="M889 679.500l1-1L1069 814l3-3 7 21-21-5 4-4z"/></g>
          <text x="844" y="427" font-size="24.500" fill="#fe2216" textLength="439" lengthAdjust="spacingAndGlyphs">文件--》导出--》PDF--》选择保存目录</text>
        </svg>
        <p class="after">效果如下:</p>
      </blockquote>
    </article>
    <span class="float"><svg viewBox="0 0 16 16"><path d="M3 1h11v4H7v6H3z" fill="#fff"/><path d="M8 5.500h7v8H8zM9.500 7.500v4l2-2 2 2v-4M1 8v5h4M3.500 11.500L5 13l-1.500 1.500" fill="none" stroke="#fff"/></svg></span>
    <div class="scroll"><i>▲</i><b></b><i>▼</i></div>
  </div>

  <aside class="side">
    <svg class="ic" viewBox="0 0 16 16"><path d="M1 8h14" stroke="#999" stroke-width="2"/></svg>
    <svg class="ic"><use href="#search"/></svg>
    <svg class="ic" viewBox="0 0 16 16"><use href="#trans"/><path d="M9 8l3-6 3 6M10 6h4"/></svg>
    <svg class="ic" viewBox="0 0 16 16"><path d="M0 4.500h2.500M6.500 4.500H16M0 11.500h9M13.500 11.500H16"/><circle cx="4.500" cy="4.500" r="2.300"/><circle cx="11.300" cy="11.500" r="2.300"/></svg>
    <svg class="ic" viewBox="0 0 16 16"><path d="M7 14.500l-6.500-1v-12l7 1.500 7-1.500V8M7.500 3v4"/><circle cx="11" cy="11" r="3.500"/><path d="M13.500 13.500l2 2"/></svg>
    <svg class="ic" viewBox="0 0 16 16"><circle cx="8" cy="8" r="7.500"/><path d="M5.800 6.300c0-3 4.500-3 4.500-.3 0 1.800-2.300 1.500-2.300 4M8 11.500v1"/></svg>
    <svg class="ic" viewBox="0 0 16 16"><circle cx="2" cy="8" r="1.600"/><circle cx="8" cy="8" r="1.600"/><circle cx="14" cy="8" r="1.600"/></svg>
  </aside>
</main>

<footer class="status">
  <span class="c40"><svg class="ic" viewBox="0 0 16 16"><path d="M1.500 2.500h13v11h-13zM5.500 5v6"/></svg></span>
  <i class="vsep"></i>
  <span class="c40"><svg class="ic"><use href="#first"/></svg></span>
  <span class="c24"><svg class="ic"><use href="#prev"/></svg></span>
  <span class="statbox">2/7</span>
  <span class="c40"><svg class="ic"><use href="#next"/></svg></span>
  <span class="c24"><svg class="ic"><use href="#last"/></svg></span>
  <i class="vsep gap"></i>
  <span class="back">回到第3页</span>
  <div class="view">
    <span class="eye"><svg class="ic" viewBox="0 0 16 16"><path d="M.5 8Q8-2 15.500 8 8 18 .5 8z"/><circle cx="8" cy="8" r="2.500"/></svg><svg class="ic bold"><use href="#chev"/></svg></span>
    <i class="vsep"></i>
    <span class="c24 on"><svg class="ic"><use href="#cont"/></svg></span>
    <i class="vsep"></i>
    <span class="c24 on"><svg class="ic" viewBox="0 0 16 16"><path d="M2.500 2h11v12h-11zM5 6.500h6M5 9.500h4"/></svg></span>
    <span class="c24"><svg class="ic" viewBox="0 0 16 16"><path d="M2.500 2h4v12h-4zM9.500 2h4v12h-4z"/></svg></span>
    <i class="vsep"></i>
    <span class="c24"><svg class="playbtn" viewBox="0 0 20 18"><rect width="20" height="18" rx="2" fill="#de325c"/><path d="M8 5v8l6-4z" fill="#fff"/></svg></span>
    <i class="vsep"></i>
    <span class="c24"><svg class="ic s"><use href="#one"/></svg></span>
    <span class="c24"><svg class="ic s"><use href="#fitpage"/></svg></span>
    <span class="c24 on"><svg class="ic s"><use href="#fitwidth"/></svg></span>
    <i class="vsep"></i>
    <span class="pct">187%<svg class="ic bold"><use href="#chev"/></svg></span>
    <span class="c24"><svg class="ic heavy" viewBox="0 0 16 16"><path d="M2 8h12"/></svg></span>
    <span class="slider"><i></i><b></b></span>
    <span class="c24"><svg class="ic heavy" viewBox="0 0 16 16"><path d="M3 8h10M8 3v10"/></svg></span>
    <span class="c24"><svg class="ic" viewBox="0 0 16 16"><path d="M9.500 2.500h4.500V6M14 2.500L10 6M2 5V2.500h3M6.500 13.500H2V10M2 13.500L6 10M14 11v2.500h-3"/></svg></span>
  </div>
</footer>
</div>
</body>
</html>
```
FILE: styles.css
```css
* { box-sizing: border-box; }
html { height: 1040px; overflow: hidden; }
body {
  margin: 0;
  height: 1040px;
  font: 12px/17px "Noto Sans", "Noto Sans CJK SC", sans-serif;
  color: #222;
  overflow: hidden;
}
h1, h2, p, ul, blockquote { margin: 0; padding: 0; }
i, em { font-style: normal; }
.defs { position: absolute; width: 0; height: 0; }
.app {
  width: 1920px;
  height: 1040px;
  display: flex;
  flex-direction: column;
  background: linear-gradient(90deg, #e5e5e8 0, #e3e4e5 35%, #e1e4e2 60%, #e2e2e2 85%);
}
.ic { width: 16px; height: 16px; flex: none; fill: none; stroke: #333; stroke-width: 1.1; overflow: visible; }
.gray { stroke: #888; }
.faint { stroke: #aaa; }
.bold { stroke-width: 1.5; }
.heavy { stroke-width: 2; }
.mini { width: 14px; height: 14px; margin: 0 -4px 0 -1px; fill: none; stroke: #333; stroke-width: 1.6; flex: none; }
.vsep { width: 1px; height: 16px; background: #c6c6c8; flex: none; }
.blue { stroke: #2b55d8; }
.orange { stroke: #d0581f; }
.red { stroke: #c8194a; }

/* title bar */
.titlebar { height: 41px; display: flex; align-items: center; padding: 1px 12px 0 4px; flex: none; }
.tab { height: 30px; border-radius: 6px; display: flex; align-items: center; font-size: 13px; white-space: nowrap; }
.tab-home { width: 112px; background: #d9d9dc; padding-left: 12px; gap: 7px; font-size: 12.5px; }
.wps { width: 16px; height: 12px; }
.tab-doc { width: 240px; margin-left: 4px; background: #fff; border: 1px solid #d2d2d4; padding: 0 9px 0 7px; font-size: 12.6px; }
.pdf { width: 16px; height: 16px; margin-right: 6px; }
.tab-name { flex: 1; }
.tab-x { width: 13px; height: 13px; margin-left: 7px; }
.plus { margin-left: 11px; width: 15px; height: 15px; stroke-width: 1.6; }
.newchev { margin-left: 5px; }
.win { margin-left: auto; display: flex; align-items: center; gap: 16px; padding-bottom: 2px; }
.login { display: flex; gap: 5px; color: #2754dc; margin-right: 15px; }
.win > .ic:nth-last-child(-n+2) { margin-left: 8px; }

/* menu bar */
.menubar { height: 34px; display: flex; align-items: center; flex: none; padding: 0 10px 6px 15px; font-size: 13px; }
.file { margin: 0 12px 0 5px; font-size: 12px; }
.quick { display: flex; gap: 10px; padding: 0 6px 0 12px; }
.dropbtn { width: 24px; height: 24px; border-radius: 4px; background: #d3d3d6; padding: 4px; margin-right: 8px; }
.tabs { display: flex; align-items: center; gap: 31px; margin-left: 22px; }
.tabs span { height: 26px; line-height: 25px; padding-top: 1px; border-bottom: 2px solid transparent; }
.tabs .on { color: #c8194a; font-weight: 700; border-color: #c8194a; }
.menu-right { margin-left: auto; display: flex; align-items: center; gap: 12px; }
.share { width: 56px; height: 24px; border-radius: 4px; background: #de325c; color: #fff; font-size: 12px; display: flex; align-items: center; gap: 3px; padding-left: 7px; }
.share .ic { stroke: #fff; }

/* ribbon */
.ribbon {
  position: relative;
  z-index: 2;
  height: 74px;
  flex: none;
  margin: 0 13px;
  background: #fff;
  border-radius: 8px;
  box-shadow: 0 0 0 1px #c9c9c9, 0 3px 5px rgba(0,0,0,.14);
  padding-top: 8px;
  display: grid;
  grid-template-columns: 77px 83px 56px 86px 59px 150px 56px 215px 65px 67px 60px 60px 48px 110px;
  white-space: nowrap;
}
.col { display: grid; grid-template-rows: 28px 28px; justify-items: center; align-items: center; justify-content: center; }
.col span { display: flex; align-items: center; }
.lbl { padding-bottom: 2px; }
.sep { background: linear-gradient(#d0d0d0, #d0d0d0) right 0 top 0/1px 62px no-repeat; }
.big { width: 20px; height: 20px; fill: none; stroke: #333; stroke-width: 1.1; overflow: visible; }
.btn { height: 24px; border-radius: 4px; display: flex; align-items: center; gap: 4px; padding: 0 6px 1px; }
.btn.on, .sq.on { background: #e5e5e5; }
.hand { padding: 0 9px 0 12px; }
.hand .btn { width: 56px; }
.play { padding-left: 2px; }
.read { padding-right: 11px; }
.find { padding-left: 7px; }
.trans { justify-items: start; justify-content: start; padding-left: 1px; }
.trans .btn { padding-left: 4px; }
.zoomgrid { display: grid; grid-template: 28px 28px / repeat(5, 30px); justify-items: center; align-items: center; }
.zoombox { grid-column: span 3; width: 88px; height: 24px; justify-self: start; border: 1px solid #bbb; border-radius: 4px; display: flex; align-items: center; justify-content: space-between; padding: 0 3px 0 7px; font-size: 12.5px; }
.sq { width: 24px; height: 24px; border-radius: 4px; padding: 4px; }
.prow { height: 28px; display: flex; align-items: center; padding-left: 8px; gap: 9px; }
.pagebox { width: 104px; height: 23px; margin: 0 -3px; border: 1px solid #bbb; border-radius: 4px; text-align: center; line-height: 20px; font-size: 12.5px; }
.vrow { height: 28px; display: flex; align-items: center; padding-left: 3px; gap: 4px; }
.vrow .btn { width: 56px; }
.vrow .dbl { width: 64px; padding: 0 4px 1px; }
.vrow .wide { width: 80px; }

/* work area */
.main { flex: 1; min-height: 0; display: flex; }
.rail { width: 56px; border-right: 1px solid #c6c6c8; padding: 17px 0 0 12px; display: flex; flex-direction: column; gap: 8px; background: linear-gradient(#e6e5e8, #e5e5e4 40%, #e6e3e1 70%, #e3e3e1); }
.rail span { width: 32px; height: 32px; border-radius: 5px; padding: 8px; }
.rail .on { background: #cecece; }
.panel { width: 261px; border-right: 1px solid #c9c9c9; padding: 17px 12px 0; background: linear-gradient(170deg, #e5e5e8 0, #e6e5e6 30%, #e8e5e2 50%, #e5e5e0 70%, #e3e4de); }
.panel-head { height: 24px; display: flex; justify-content: space-between; align-items: center; padding-right: 4px; }
.panel-head h2 { font-size: 14px; font-weight: 400; }
.panel-search { margin-top: 16px; height: 32px; background: #fff; border: 1px solid #c8c8c8; border-bottom-color: #999; border-radius: 4px; display: flex; align-items: center; gap: 9px; padding-left: 12px; color: #888; }
.tools { display: flex; gap: 4px; margin-top: 8px; }
.tools span { width: 24px; height: 24px; padding: 3px; background: #fff; border: 1px solid #c4c4c4; border-radius: 4px; }
.tree { list-style: none; padding-top: 16px; color: #000; white-space: nowrap; }
.tree li { display: flex; align-items: center; padding: 7px 7px 8px 0; min-height: 32px; margin-bottom: 2px; border-radius: 4px; }
.tree .ic { align-self: flex-start; margin-top: 1px; }
.tree p { flex: 1; padding-left: 8px; line-height: 17px; }
.tree .l3 p { font-size: 12.1px; }
.tree em { color: #555; }
.tree b { width: 9px; margin-left: -9px; font: 8px "DejaVu Sans"; color: #333; }
.tree li:has(br) b { align-self: flex-start; }
.tree .l1 { padding-left: 12px; }
.tree .l2 { padding-left: 24px; }
.tree .l3 { padding-left: 36px; }
.tree .on { background: #cecdcd; }

/* document */
.viewer { flex: 1; min-width: 0; display: flex; justify-content: space-between; position: relative; overflow: hidden; padding-left: 23px; background: linear-gradient(#e3e3e5, #e5e5e4 50%, #e2e4de 80%, #e2e2e0); }
.page { width: 1484px; height: 900px; background: #fff; border: solid #c5c5c5; border-width: 0 1px; padding: 0 211px 0 185px; box-shadow: 0 0 5px rgba(0,0,0,.18); font-family: "Open Sans", "Noto Sans CJK SC", sans-serif; }
.page h1 { font-size: 30.4px; line-height: 44px; color: #333; white-space: nowrap; height: 68px; margin-left: -1px; }
.page blockquote { border-left: 8px solid #dfe2e5; padding: 1.5px 0 0 28px; color: #777; font-size: 24.3px; line-height: 38.9px; height: 900px; }
.page p { text-indent: 48px; margin-bottom: 19.3px; white-space: nowrap; }
.page .see { margin-bottom: 17.5px; }
.page a { color: #4183c4; font-weight: 700; text-decoration: underline; }
.shot { display: block; width: 1050px; height: 595px; font-family: "Noto Sans", "Noto Sans CJK SC", sans-serif; }
.page .after { padding-top: 17px; }
.shot text { dominant-baseline: central; text-indent: 0; white-space: pre; transform: translateY(-1px); }
.t8 { font-size: 8.2px; }
.t9 { font-size: 9.5px; }
.t10 { font-size: 9.8px; }
.t11 { font-size: 10.8px; }
.d { fill: #333; }
.m { fill: #777; }
.k { fill: #111; }
.h { font-weight: 700; fill: #2b2b2b; }
.h.g { fill: #666; }
.end { text-anchor: end; }
.mid { text-anchor: middle; }
.lk { fill: #2a6fbe; font-size: 10.8px; font-weight: 700; text-decoration: underline; }
.ln { fill: none; stroke: #444; stroke-width: 1; }
.ico { fill: none; stroke: #777; stroke-width: .9; }
.float { position: absolute; left: 1495px; top: 11px; width: 32px; height: 32px; border-radius: 50%; background: #4087f0; border: 2px solid #fff; padding: 6px; }
.float svg { display: block; width: 16px; height: 16px; }
.scroll { width: 15px; display: flex; flex-direction: column; align-items: center; padding: 7px 0 4px; color: #777; font: 8px/9px "DejaVu Sans"; }
.scroll b { width: 8px; height: 48px; border-radius: 3px; background: #c6c6c6; margin: 174px 0 auto; }
.side { width: 57px; border-left: 1px solid #c6c6c6; background: #e2e2e1; display: flex; flex-direction: column; align-items: center; padding: 17px 0 0; gap: 24px; }
.side .ic:first-child { margin-bottom: -8px; }

/* status bar */
.status { height: 24px; flex: none; border-top: 1px solid #c4c4c4; display: flex; align-items: center; padding: 0 12px 1px 4px; background: linear-gradient(90deg, #e3e3e2, #e2e4de 25%, #e2e2e0 50%, #e2e2e1); white-space: nowrap; line-height: 16px; }
.status .vsep { height: 14px; }
.c40, .c24 { height: 23px; display: flex; align-items: center; justify-content: center; flex: none; }
.c40 { width: 40px; }
.c24 { width: 24px; }
.c24.on { background: #cbcbca; border-radius: 3px; }
.statbox { width: 110px; height: 20px; margin-left: 8px; border: 1px solid #bbb; border-radius: 4px; background: #fff; text-align: center; line-height: 17px; font-size: 12.5px; }
.gap { margin: 0 12px 0 8px; }
.back { padding-bottom: 2px; }
.view { margin-left: auto; display: flex; align-items: center; gap: 8px; }
.eye { display: flex; width: 34px; }
.s { width: 14px; height: 14px; }
.playbtn { width: 20px; height: 18px; }
.pct { width: 61px; padding-left: 8px; display: flex; align-items: center; justify-content: space-between; }
.slider { width: 106px; height: 2px; background: #b5b5b5; position: relative; }
.slider i { display: block; width: 50px; height: 2px; background: #2b55d8; }
.slider b { position: absolute; left: 47px; top: -5px; width: 12px; height: 12px; border-radius: 50%; background: #888; border: 3px solid #fff; box-shadow: 0 0 1px #888; }
```
